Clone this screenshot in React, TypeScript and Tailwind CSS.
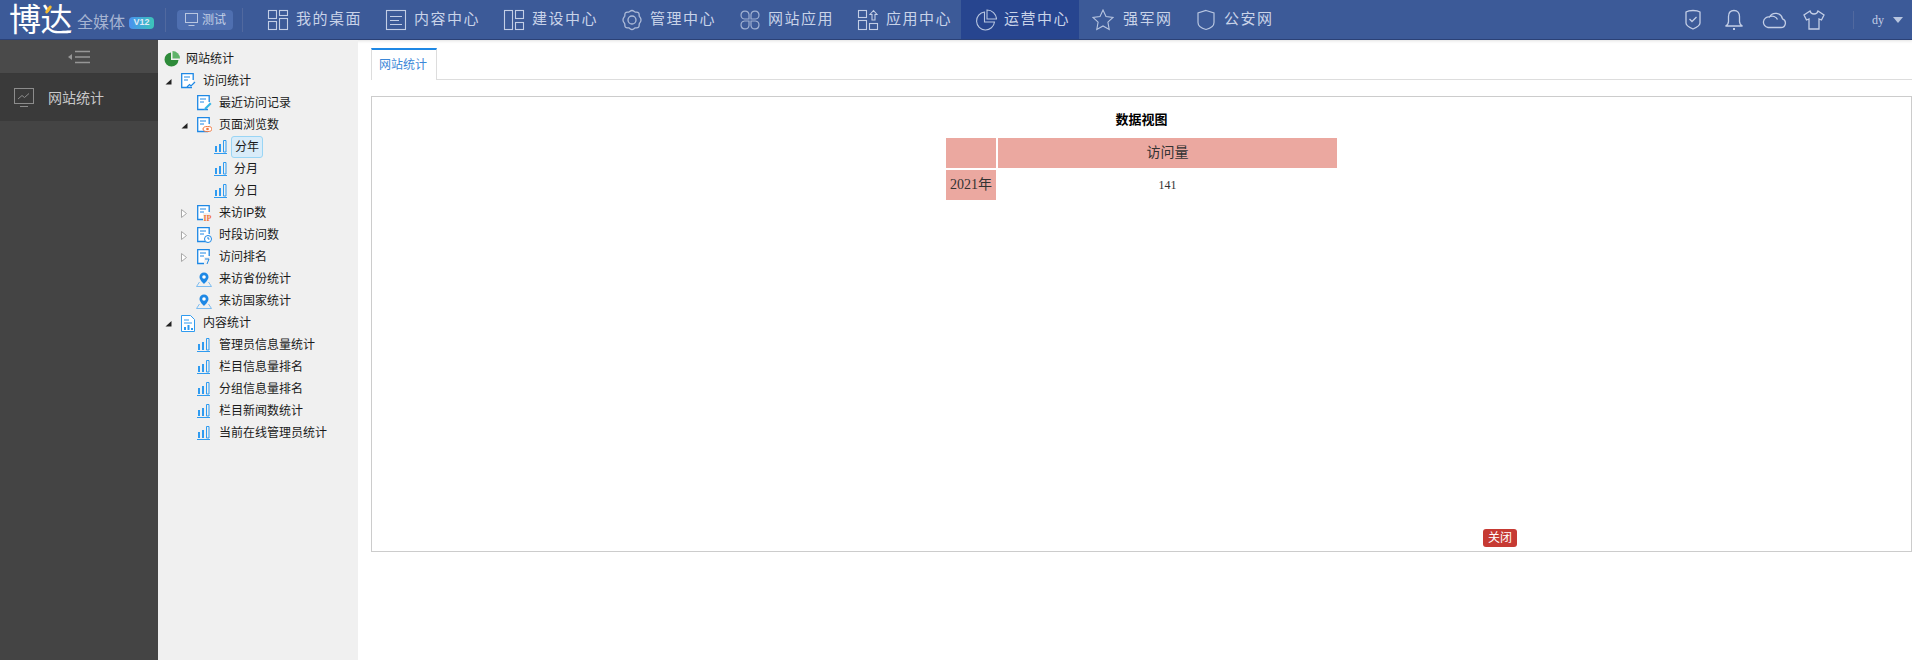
import React from 'react';

const navStroke = '#c3cee6';

function NavIcon({ name }: { name: string }) {
    const common = { width: 22, height: 22, viewBox: '0 0 22 22', fill: 'none', stroke: navStroke, strokeWidth: 1.1 };
    switch (name) {
        case 'desk':
            return (
                <svg {...common}>
                    <rect x="1.5" y="1.5" width="8" height="8" />
                    <rect x="1.5" y="12.5" width="8" height="8" />
                    <rect x="12.5" y="1.5" width="8" height="5" />
                    <rect x="12.5" y="9.5" width="8" height="11" />
                </svg>
            );
        case 'content':
            return (
                <svg {...common}>
                    <rect x="1.5" y="1.5" width="19" height="19" />
                    <path d="M5 7.5h12M5 11.5h9M5 15.5h12" />
                </svg>
            );
        case 'build':
            return (
                <svg {...common}>
                    <rect x="1.5" y="1.5" width="8" height="19" />
                    <rect x="12.5" y="1.5" width="8" height="8" />
                    <rect x="12.5" y="13.5" width="8" height="7" />
                </svg>
            );
        case 'gear':
            return (
                <svg {...common} strokeWidth={1.3} stroke="#aebcd9">
                    <path d="M11 1.500c1.600 0 2 1.300 3.200 1.600 1.200.3 2.500-.3 3.400.8.900 1.100.3 2.100.7 3.300.4 1.100 1.700 1.600 1.700 3.800s-1.300 2.600-1.700 3.800c-.4 1.200.2 2.200-.7 3.300-.9 1.100-2.200.5-3.400.8-1.200.3-1.600 1.600-3.200 1.600s-2-1.300-3.200-1.600c-1.200-.3-2.500.3-3.400-.8-.9-1.100-.3-2.100-.7-3.300-.4-1.200-1.700-1.600-1.700-3.800s1.300-2.700 1.700-3.800c.4-1.200-.2-2.200.7-3.300.9-1.100 2.200-.5 3.400-.8C9 2.800 9.400 1.500 11 1.500z" />
                    <circle cx="11" cy="11" r="4" />
                </svg>
            );
        case 'apps':
            return (
                <svg {...common} strokeWidth={1.2} stroke="#9fb0d2">
                    <path d="M10 10H5.500a4 4 0 1 1 4.500-4.500zM12 10h4.500A4 4 0 1 0 12 5.500zM10 12H5.500a4 4 0 1 0 4.500 4.500zM12 12h4.500A4 4 0 1 1 12 16.500z" />
                </svg>
            );
        case 'appcenter':
            return (
                <svg {...common}>
                    <rect x="1.5" y="1.5" width="8" height="7" />
                    <rect x="1.500" y="11.500" width="8" height="9" />
                    <rect x="12.500" y="14.500" width="8" height="6" />
                    <path d="M16.500 1.500l3.500 4h-2v5.500h-3V5.500h-2z" />
                </svg>
            );
        case 'pie':
            return (
                <svg {...common} strokeWidth={1.1} stroke="#b7c5e0">
                    <path d="M9.500 3a9 9 0 1 0 10 10H9.500z" />
                    <path d="M12 1v9h9.500A9.500 9.500 0 0 0 12 1z" />
                </svg>
            );
        case 'star':
            return (
                <svg {...common} strokeWidth={1.1} stroke="#b7c5e0">
                    <path d="M11 1l3 6.500 7 .9-5.100 4.800 1.300 7.300L11 17l-6.200 3.500 1.300-7.300L1 8.400l7-.9z" />
                </svg>
            );
        default:
            return (
                <svg {...common} strokeWidth={1.2} stroke="#b7c5e0">
                    <path d="M11 1.500l8 2.500v9.500c0 3.500-4 6-8 7-4-1-8-3.500-8-7V4z" />
                </svg>
            );
    }
}

function NavItem({ icon, label, active, className }: { icon: string; label: string; active?: boolean; className: string }) {
    return (
        <div className={`flex h-full items-center gap-[7px] ${active ? 'bg-[#27458f]' : ''} ${className}`}>
            <NavIcon name={icon} />
            <span className="text-[15px] tracking-[1.5px] whitespace-nowrap text-[#c9d3e8]">{label}</span>
        </div>
    );
}

function TopBar() {
    return (
        <header className="flex h-10 shrink-0 items-center border-b border-[#2b4176] bg-[#3c5a98] shadow-[0_1px_3px_rgba(0,0,0,0.12)]">
            {/* logo */}
            <div className="relative ml-[9px] w-[66px] text-[32px] leading-[32px] font-normal tracking-[-0.5px] whitespace-nowrap text-white">
                博达
                <span className="absolute top-[1px] left-[38px] h-[9px] w-[3px] rotate-[35deg] rounded-sm bg-[#f4b92f]" />
            </div>
            <span className="mt-[7px] ml-[2px] text-[16px] leading-5 text-[#a6b4d2]">全媒体</span>
            <span className="mt-[7px] ml-[4px] flex h-[12px] w-[25px] items-center justify-center rounded-sm bg-gradient-to-r from-[#4a90f0] to-[#3cc4b8] text-[9px] font-bold text-[#dfeaf7]">
                V12
            </span>
            <div className="ml-[11px] h-6 w-px bg-[#51699f]" />
            <div className="ml-[11px] flex h-5 w-[56px] items-center justify-center gap-[3px] rounded-sm bg-[#4f6fb0]">
                <svg width="15" height="15" viewBox="0 0 15 15" fill="none" stroke="#b9c6e0">
                    <rect x="1.500" y="1.500" width="12" height="9" />
                    <path d="M4.500 13.500h6" />
                </svg>
                <span className="text-xs text-[#c4d0e6]">测试</span>
            </div>
            <div className="ml-[9px] h-6 w-px bg-[#51699f]" />

            <nav className="ml-3 flex h-full items-center">
                <NavItem icon="desk" label="我的桌面" className="w-[118px] pl-3" />
                <NavItem icon="content" label="内容中心" className="w-[118px] pl-3" />
                <NavItem icon="build" label="建设中心" className="w-[118px] pl-3" />
                <NavItem icon="gear" label="管理中心" className="w-[118px] pl-3" />
                <NavItem icon="apps" label="网站应用" className="w-[118px] pl-3" />
                <NavItem icon="appcenter" label="应用中心" className="w-[116px] pl-3" />
                <NavItem icon="pie" label="运营中心" active className="w-[118px] pl-[14px]" />
                <NavItem icon="star" label="强军网" className="w-[104px] gap-[9px] pl-[13px]" />
                <NavItem icon="shield" label="公安网" className="w-[110px] pl-3" />
            </nav>

            <div className="ml-auto flex items-center">
                <svg width="18" height="22" viewBox="0 0 18 22" fill="none" stroke="#c3cee6" strokeWidth="1.300">
                    <path d="M9 1.500c3 0 5.500.5 7 1.500v11c0 2-3.500 4.500-7 6-3.500-1.500-7-4-7-6V3c1.500-1 4-1.500 7-1.500z" />
                    <path d="M5.500 10l2.500 2.500 4.500-4.500" />
                </svg>
                <svg className="ml-[21px]" width="22" height="22" viewBox="0 0 22 22" fill="none" stroke="#c3cee6" strokeWidth="1.300">
                    <path d="M11 1.500c-3.500 0-5.500 2.500-5.500 6v5c0 2-1 3.500-3 4.500h17c-2-1-3-2.500-3-4.500v-5c0-3.500-2-6-5.500-6z" />
                    <path d="M10 20h2" strokeWidth="2" />
                </svg>
                <svg className="ml-[16px]" width="26" height="22" viewBox="0 0 26 22" fill="none" stroke="#c3cee6" strokeWidth="1.300">
                    <path d="M7 18.500h13a4.500 4.500 0 0 0 1.500-8.700A7 7 0 0 0 8.500 8 5.300 5.300 0 0 0 7 18.500z" />
                    <path d="M9 7.500c2.500-1 6 0 7.500 3" />
                </svg>
                <svg className="ml-[15px]" width="24" height="22" viewBox="0 0 24 22" fill="none" stroke="#c3cee6" strokeWidth="1.300">
                    <path d="M8 2l-6 4 2.500 5 2.500-1v10h10V10l2.500 1L22 6l-6-4c-.5 2-2 3-4 3s-3.500-1-4-3z" />
                </svg>
                <div className="ml-[27px] h-[18px] w-px bg-[#51699f]" />
                <span className="ml-[18px] font-['Liberation_Serif',serif] text-xs text-[#c3cee6]">dy</span>
                <span className="mr-[9px] ml-[9px] h-0 w-0 border-x-[5px] border-t-[6px] border-x-transparent border-t-[#b9c6e0]" />
            </div>
        </header>
    );
}

function Sidebar() {
    return (
        <aside className="flex w-[158px] shrink-0 flex-col bg-[#444444]">
            <div className="flex h-[34px] items-center justify-center border-b border-[#393939] bg-[#4a4a4a]">
                <svg width="24" height="14" viewBox="0 0 24 14" fill="none" stroke="#969696" strokeWidth="1.500">
                    <path d="M8 1.500h15M8 7h15M8 12.500h15" />
                    <path d="M5 4v6L1 7z" fill="#969696" stroke="none" />
                </svg>
            </div>
            <div className="flex h-[47px] items-center bg-[#3a3a3a] pl-[14px]">
                <svg width="20" height="20" viewBox="0 0 20 20" fill="none" stroke="#8c8c8c">
                    <rect x="0.500" y="0.500" width="19" height="15" />
                    <path d="M4 11l4-3.500 2.500 2L15 5.500" />
                    <path d="M6 18.500h8" />
                </svg>
                <span className="ml-[14px] text-sm text-[#c8c8c8]">网站统计</span>
            </div>
        </aside>
    );
}

function TreeIcon({ kind }: { kind: string }) {
    if (kind === 'bars') {
        return (
            <svg width="14" height="15" viewBox="0 0 14 15" fill="none" className="-mt-px shrink-0">
                <path d="M1 7h2v6H1zM5 5h2v8H5z" fill="#2f9bf0" />
                <path d="M9.500 1.500h2.500v11.500H9.500z" stroke="#2f9bf0" />
                <path d="M0 14.500h13" stroke="#2f9bf0" />
            </svg>
        );
    }
    if (kind === 'pin') {
        return (
            <svg width="16" height="15" viewBox="0 0 16 15" fill="none" className="-ml-px shrink-0">
                <path d="M8 .5a4.500 4.500 0 0 1 4.500 4.500C12.500 8 8 12 8 12S3.500 8 3.500 5A4.500 4.500 0 0 1 8 .5z" fill="#1e88e5" />
                <circle cx="8" cy="5" r="1.800" fill="#ffffff" />
                <path d="M3.500 10L.5 14.500h15L12.500 10" stroke="#7dbcf0" />
            </svg>
        );
    }
    if (kind === 'report') {
        return (
            <svg width="14" height="17" viewBox="0 0 14 17" fill="none" className="shrink-0">
                <path d="M.5.500h9l4 4v12H.5z" stroke="#2f9bf0" fill="#ffffff" />
                <path d="M3 5h5M3 8h8" stroke="#2f9bf0" />
                <path d="M3 15v-3h2v3zM6.500 15v-5h2v5zM10 15v-2h2v2z" fill="#2f9bf0" />
            </svg>
        );
    }
    return (
        <svg width="15" height="16" viewBox="0 0 15 16" fill="none" className="shrink-0">
            <path d="M11 14.500H.7V.7h11.500V7" stroke="#1e88e5" strokeWidth="1.300" fill="#ffffff" />
            <path d="M3 4h6M3 7h4" stroke="#1e88e5" />
            {kind === 'line' && <path d="M6 14l2.500-2.500 1.500 1.500 4-4" stroke="#1e88e5" strokeWidth="1.200" />}
            {kind === 'pen' && <path d="M7 15l1-2.500L13 7.500l1.500 1.500-5 5z" fill="#35b6e6" />}
            {kind === 'eye' && (
                <g>
                    <ellipse cx="10.500" cy="12" rx="4.500" ry="2.500" fill="#ffffff" stroke="#f0743a" />
                    <circle cx="10.500" cy="12" r="1.300" fill="#f0743a" />
                </g>
            )}
            {kind === 'ip' && (
                <g>
                    <rect x="6" y="8" width="9" height="8" fill="#f0f0f0" />
                    <text x="6.500" y="15.500" fontSize="8" fontWeight="700" fill="#f0743a" fontFamily="Liberation Serif, serif">
                        IP
                    </text>
                </g>
            )}
            {kind === 'clock' && (
                <g>
                    <circle cx="11" cy="12" r="3.500" fill="#ffffff" stroke="#1e88e5" />
                    <path d="M11 10v2h1.500" stroke="#1e88e5" />
                </g>
            )}
            {kind === 'rank' && (
                <g>
                    <rect x="7" y="8" width="8" height="8" fill="#f0f0f0" />
                    <path d="M8 10h4l-2 5" stroke="#1e88e5" />
                </g>
            )}
        </svg>
    );
}

type Row = { label: string; level: number; icon?: string; arrow?: 'open' | 'closed'; selected?: boolean };

const rows: Row[] = [
    { label: '访问统计', level: 1, icon: 'line', arrow: 'open' },
    { label: '最近访问记录', level: 2, icon: 'pen' },
    { label: '页面浏览数', level: 2, icon: 'eye', arrow: 'open' },
    { label: '分年', level: 3, icon: 'bars', selected: true },
    { label: '分月', level: 3, icon: 'bars' },
    { label: '分日', level: 3, icon: 'bars' },
    { label: '来访IP数', level: 2, icon: 'ip', arrow: 'closed' },
    { label: '时段访问数', level: 2, icon: 'clock', arrow: 'closed' },
    { label: '访问排名', level: 2, icon: 'rank', arrow: 'closed' },
    { label: '来访省份统计', level: 2, icon: 'pin' },
    { label: '来访国家统计', level: 2, icon: 'pin' },
    { label: '内容统计', level: 1, icon: 'report', arrow: 'open' },
    { label: '管理员信息量统计', level: 2, icon: 'bars' },
    { label: '栏目信息量排名', level: 2, icon: 'bars' },
    { label: '分组信息量排名', level: 2, icon: 'bars' },
    { label: '栏目新闻数统计', level: 2, icon: 'bars' },
    { label: '当前在线管理员统计', level: 2, icon: 'bars' },
];

function TreeArrow({ type }: { type?: 'open' | 'closed' }) {
    if (type === 'open') {
        return (
            <svg width="7" height="7" viewBox="0 0 7 7" className="shrink-0">
                <path d="M6.500 1v5.500H.5z" fill="#222222" />
            </svg>
        );
    }
    if (type === 'closed') {
        return (
            <svg width="6" height="9" viewBox="0 0 6 9" fill="#ffffff" stroke="#a8a8a8" className="mr-px shrink-0">
                <path d="M.5.500l5 4-5 4z" />
            </svg>
        );
    }
    return <span className="w-[7px] shrink-0" />;
}

function TreeRow({ row }: { row: Row }) {
    const indent = row.level === 1 ? 'pl-[7px]' : row.level === 2 ? 'pl-[23px]' : 'pl-[56px]';
    const iconGap = row.level === 3 ? 'ml-0' : 'ml-[9px]';
    return (
        <div className={`flex h-[22px] items-center ${indent}`}>
            {row.level !== 3 && <TreeArrow type={row.arrow} />}
            <span className={`flex w-[16px] justify-start ${iconGap}`}>
                <TreeIcon kind={row.icon ?? 'line'} />
            </span>
            {row.selected ? (
                <span className="ml-[1px] flex h-[22px] items-center rounded-[3px] border border-[#99d5f5] bg-[#d9ecf9] px-[3px] text-xs text-[#1a1a1a]">
                    {row.label}
                </span>
            ) : (
                <span className={`text-xs text-[#1a1a1a] ${row.level === 3 ? 'ml-[4px]' : 'ml-[6px]'}`}>{row.label}</span>
            )}
        </div>
    );
}

function Tree() {
    return (
        <aside className="w-[200px] shrink-0 bg-[#f0f0f0] pt-[8px]">
            <div className="flex h-[22px] items-center pl-[6px]">
                <svg width="16" height="16" viewBox="0 0 16 16" className="shrink-0">
                    <path d="M7 1.500a7 7 0 1 0 7.500 7.500H7z" fill="#2e8b3a" />
                    <path d="M8.500 0v7.500H16A7.500 7.500 0 0 0 8.500 0z" fill="#5fb36a" />
                </svg>
                <span className="ml-[6px] text-xs text-[#1a1a1a]">网站统计</span>
            </div>
            {rows.map((row) => (
                <TreeRow key={row.label} row={row} />
            ))}
        </aside>
    );
}

function Content() {
    return (
        <main className="flex min-w-0 flex-1 flex-col pt-2 pl-[13px]">
            {/* tab strip */}
            <div className="flex h-8 border-b border-[#dddddd]">
                <div className="-mb-px flex w-[66px] items-center justify-center border-t-2 border-r border-l border-t-[#1e88e5] border-r-[#dddddd] border-l-[#dddddd] bg-white pr-[2px] text-xs text-[#3b88d8]">
                    网站统计
                </div>
            </div>

            <section className="mt-4 flex h-[456px] flex-col border border-[#cccccc]">
                <h2 className="pt-[15px] text-center text-[13px] leading-4 font-bold text-black">数据视图</h2>
                <table className="mx-auto mt-[8px] w-[395px] border-separate border-spacing-[2px] font-['Liberation_Serif','Noto_Sans_CJK_SC',serif] text-[#333333]">
                    <tbody>
                        <tr>
                            <th className="h-[30px] w-[50px] bg-[#eba8a0] font-normal" />
                            <th className="h-[30px] bg-[#eba8a0] text-sm font-normal">访问量</th>
                        </tr>
                        <tr>
                            <td className="h-[30px] bg-[#eba8a0] text-center text-sm">2021年</td>
                            <td className="h-[30px] text-center text-xs">141</td>
                        </tr>
                    </tbody>
                </table>
                <button className="mt-auto mb-1 ml-[1111px] flex h-[18px] w-[34px] items-center justify-center rounded-[3px] bg-[#c63a33] text-xs text-white">
                    关闭
                </button>
            </section>
        </main>
    );
}

export default function App() {
    return (
        <div className="flex h-screen flex-col overflow-hidden bg-white font-['Liberation_Sans','Noto_Sans_CJK_SC',sans-serif]">
            <TopBar />
            <div className="flex min-h-0 flex-1">
                <Sidebar />
                <Tree />
                <Content />
            </div>
        </div>
    );
}
